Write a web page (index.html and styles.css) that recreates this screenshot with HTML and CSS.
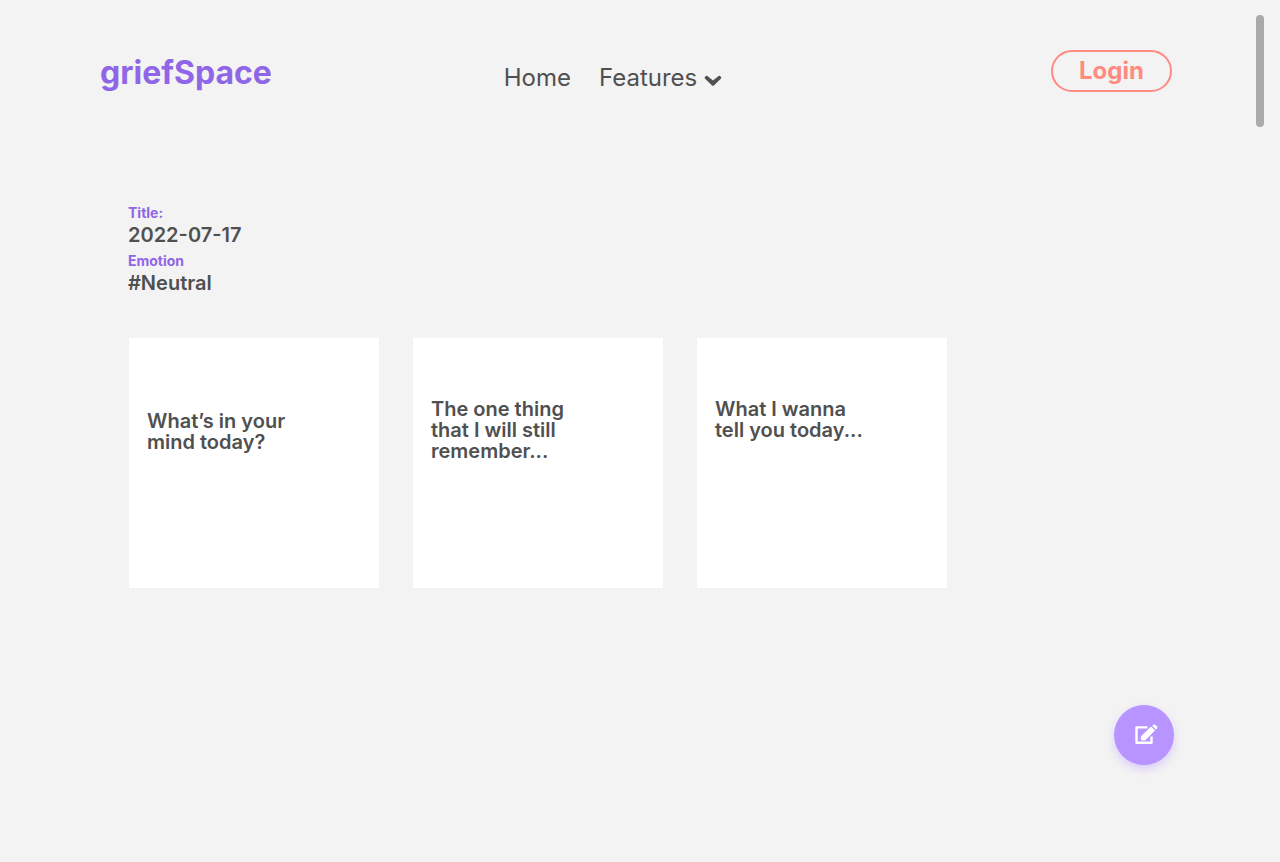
FILE: index.html
```html
<!DOCTYPE html>
<html lang="en">
<head>
<meta charset="utf-8">
<meta name="viewport" content="width=device-width, initial-scale=1">
<title>griefSpace</title>
<link rel="stylesheet" href="styles.css">
</head>
<body>
<header class="header">
  <a class="logo" href="#">griefSpace</a>
  <nav class="nav" aria-label="Main">
    <a class="nav-item" href="#">Home</a>
    <button class="nav-item nav-menu" type="button">Features
      <svg class="chevron" width="18" height="12" viewBox="0 0 18 12" aria-hidden="true"><path d="M0.800 3.400Q0.300 2.600 1 1.900L1.900 1Q2.600 0.400 3.400 1L9 5.400L14.600 1Q15.400 0.400 16.100 1L17 1.900Q17.700 2.600 17 3.400L9.900 10.400Q9 11.200 8.100 10.400Z" fill="currentColor"/></svg>
    </button>
  </nav>
  <button class="login" type="button">Login</button>
</header>
<main class="main">
  <dl class="meta">
    <dt>Title:</dt>
    <dd>2022-07-17</dd>
    <dt>Emotion</dt>
    <dd>#Neutral</dd>
  </dl>
  <section class="cards">
    <article class="card card-first"><h2>What’s in your<br>mind today?</h2></article>
    <article class="card"><h2>The one thing<br>that I will still<br>remember...</h2></article>
    <article class="card"><h2>What I wanna<br>tell you today...</h2></article>
  </section>
</main>
<button class="compose" type="button" aria-label="Write entry">
  <svg width="24" height="22" viewBox="0 0 24 22" aria-hidden="true">
    <path d="M13.500 3.400H2.500V18.800H17.500V12.500" fill="none" stroke="currentColor" stroke-width="2.400" stroke-linejoin="round"/>
    <path d="M17 3.100L20.500 6.600L11.200 15.900H7.400V12.300Z" fill="currentColor" stroke="currentColor" stroke-linejoin="round"/>
    <path d="M18.200 2L19.400 0.800Q20.300 0 21.200 0.800L23 2.600Q23.800 3.500 23 4.400L21.800 5.600Z" fill="currentColor"/>
  </svg>
</button>
<div class="scroll-thumb"></div>
</body>
</html>
```
FILE: styles.css
```css
* { box-sizing: border-box; }

body {
  margin: 0;
  min-height: 100vh;
  background: #f3f3f3;
  color: #505050;
  font-family: Inter, "Liberation Sans", sans-serif;
}

a { color: inherit; text-decoration: none; }

button {
  padding: 0;
  border: 0;
  background: none;
  color: inherit;
  font: inherit;
  cursor: pointer;
}

.header {
  display: grid;
  grid-template-columns: 1fr auto 1fr;
  align-items: start;
  padding: 50px 108px 0 100px;
}

.logo {
  justify-self: start;
  padding-top: 3px;
  color: #9066e8;
  font-size: 32px;
  font-weight: 700;
  line-height: 40px;
}

.nav {
  display: flex;
  gap: 28px;
  margin-right: 46px;
  padding-top: 13px;
}

.nav-item {
  font-size: 24px;
  line-height: 30px;
}

.nav-menu {
  display: flex;
  align-items: center;
  gap: 7px;
}

.chevron { margin-top: 6px; }

.login {
  justify-self: end;
  width: 121px;
  height: 42px;
  border: 2px solid #ff8a80;
  border-radius: 21px;
  color: #ff8a80;
  font-size: 24px;
  font-weight: 700;
  line-height: 38px;
}

.main { padding: 111px 128px 48px; }

.meta { margin: 0; }

.meta dt {
  color: #9066e8;
  font-size: 14px;
  font-weight: 700;
  line-height: 18px;
}

.meta dd {
  margin: 0 0 4px;
  font-size: 20px;
  font-weight: 600;
  line-height: 26px;
}

.cards {
  display: flex;
  flex-wrap: wrap;
  gap: 34px;
  margin: 42px 0 0 1px;
}

.card {
  width: 250px;
  min-height: 250px;
  padding: 61px 18px 18px;
  background: #fff;
}

.card-first { padding-top: 73px; }

.card h2 {
  margin: 0;
  font-size: 20px;
  font-weight: 600;
  line-height: 21px;
}

.compose {
  position: fixed;
  right: 106px;
  bottom: 97px;
  display: grid;
  place-items: center;
  width: 60px;
  height: 60px;
  padding-left: 4px;
  border-radius: 50%;
  background: #b794ff;
  box-shadow: 0 4px 8px rgba(183, 148, 255, 0.4);
  color: #fff;
}

.scroll-thumb {
  position: fixed;
  top: 15px;
  right: 16px;
  width: 8px;
  height: 112px;
  border-radius: 4px;
  background: #aaa;
}
```
